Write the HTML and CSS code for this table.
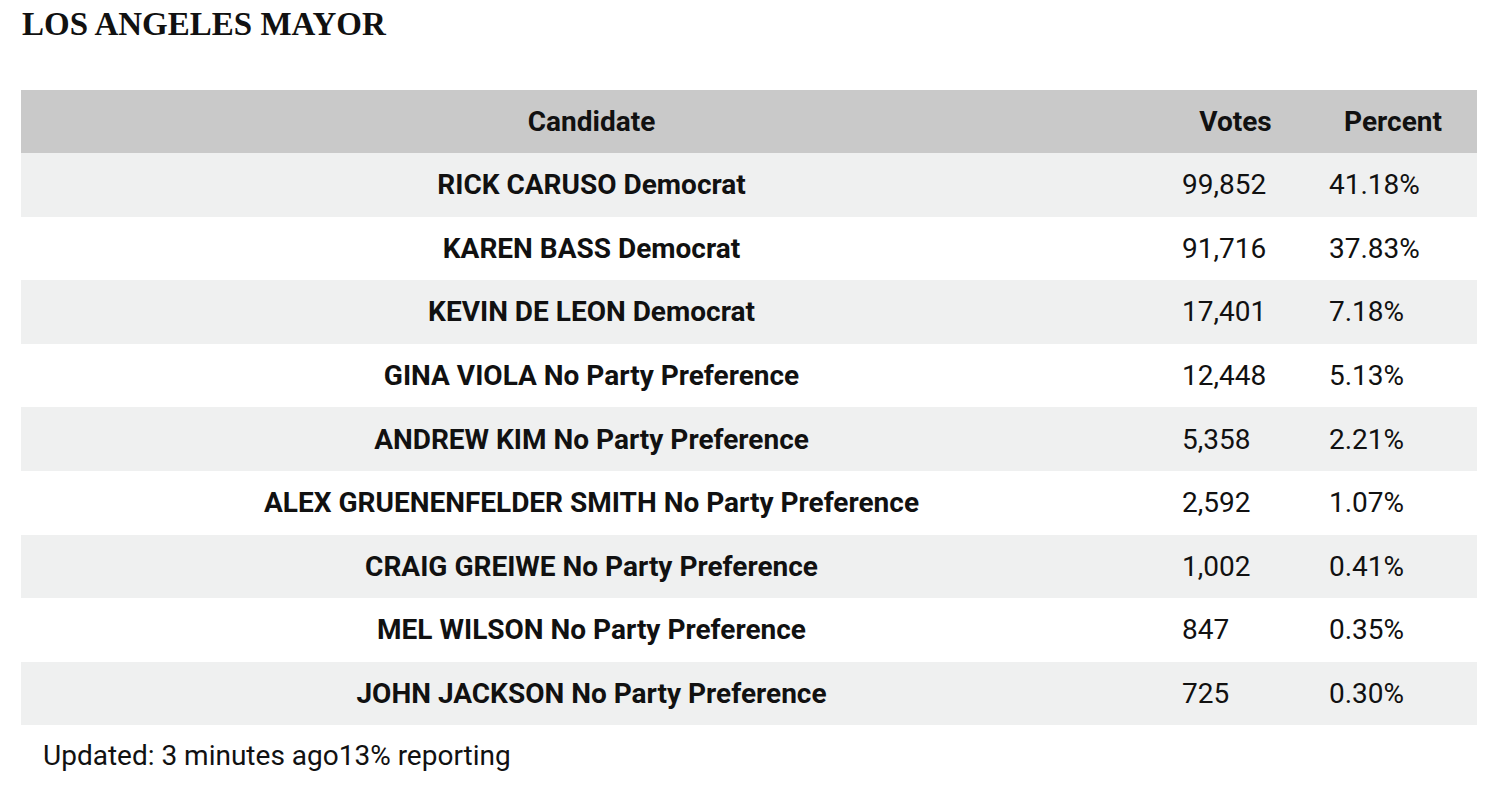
FILE: index.html
```html
<!DOCTYPE html>
<html>
<head>
<meta charset="utf-8">
<link rel="stylesheet" href="styles.css">
</head>
<body>
<div class="race">
  <h2 class="race-title">LOS ANGELES MAYOR</h2>
  <table class="results">
    <colgroup>
      <col class="col-cand">
      <col class="col-votes">
      <col class="col-pct">
    </colgroup>
    <thead>
      <tr><th>Candidate</th><th>Votes</th><th>Percent</th></tr>
    </thead>
    <tbody>
      <tr><td class="cand">RICK CARUSO Democrat</td><td>99,852</td><td>41.18%</td></tr>
      <tr><td class="cand">KAREN BASS Democrat</td><td>91,716</td><td>37.83%</td></tr>
      <tr><td class="cand">KEVIN DE LEON Democrat</td><td>17,401</td><td>7.18%</td></tr>
      <tr><td class="cand">GINA VIOLA No Party Preference</td><td>12,448</td><td>5.13%</td></tr>
      <tr><td class="cand">ANDREW KIM No Party Preference</td><td>5,358</td><td>2.21%</td></tr>
      <tr><td class="cand">ALEX GRUENENFELDER SMITH No Party Preference</td><td>2,592</td><td>1.07%</td></tr>
      <tr><td class="cand">CRAIG GREIWE No Party Preference</td><td>1,002</td><td>0.41%</td></tr>
      <tr><td class="cand">MEL WILSON No Party Preference</td><td>847</td><td>0.35%</td></tr>
      <tr><td class="cand">JOHN JACKSON No Party Preference</td><td>725</td><td>0.30%</td></tr>
    </tbody>
  </table>
  <div class="footer"><span>Updated: 3 minutes ago</span><span>13% reporting</span></div>
</div>
</body>
</html>
```

FILE: styles.css
```css
html, body {
  margin: 0;
  padding: 0;
  background: #ffffff;
}
.race {
  padding: 0 23px 0 21px;
  font-family: Roboto, "Liberation Sans", sans-serif;
  color: #111111;
}
.race-title {
  margin: 0;
  padding: 4px 0 0 1px;
  height: 90px;
  box-sizing: border-box;
  font-family: "Liberation Serif", serif;
  font-weight: 700;
  font-size: 33px;
  line-height: 40px;
  color: #111111;
}
.results {
  width: 100%;
  border-collapse: collapse;
  table-layout: fixed;
  font-size: 28px;
}
.col-cand { width: 1141px; }
.col-votes { width: 147px; }
.col-pct { width: 168px; }
.results th {
  background: #c9c9c9;
  font-weight: 700;
  text-align: center;
  height: 63px;
  padding: 0 20px;
}
.results td {
  height: 63.6px;
  padding: 0 20px;
  text-align: left;
  font-weight: 400;
}
.results td.cand {
  text-align: center;
  font-weight: 700;
}
.results tbody tr:nth-child(odd) {
  background: #eff0f0;
}
.footer {
  padding: 14px 22px;
  font-size: 28px;
  line-height: 34px;
}
```
